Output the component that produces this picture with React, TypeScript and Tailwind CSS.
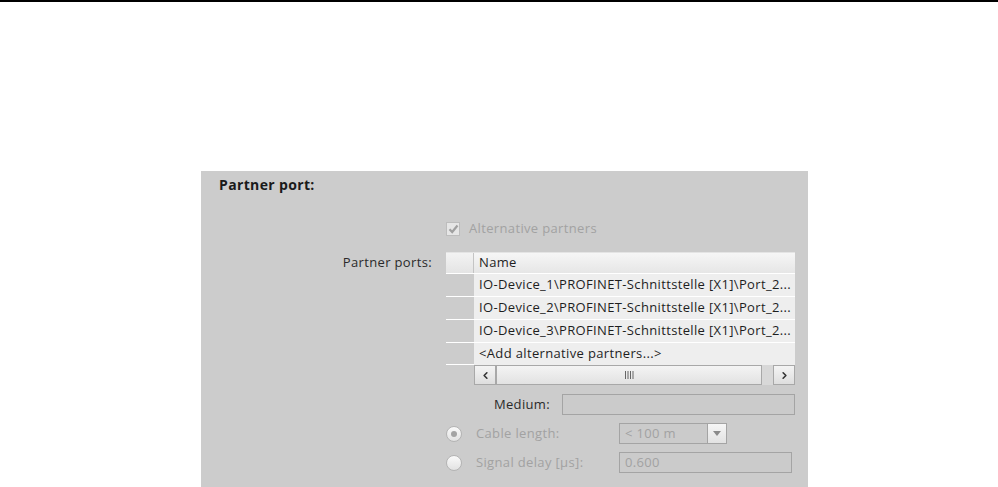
import { ChevronLeft, ChevronRight } from 'lucide-react';

const rows = [
  'IO-Device_1\\PROFINET-Schnittstelle [X1]\\Port_2...',
  'IO-Device_2\\PROFINET-Schnittstelle [X1]\\Port_2...',
  'IO-Device_3\\PROFINET-Schnittstelle [X1]\\Port_2...',
];

const Radio = ({ checked }: { checked?: boolean }) => (
  <div className="w-[16px] h-[16px] rounded-full border border-[#b4b4b4] bg-gradient-to-b from-[#fafafa] to-[#e2e2e2] flex items-center justify-center">
    {checked && <div className="w-[6px] h-[6px] rounded-full bg-[#a4a4a4]" />}
  </div>
);

const PartnerTable = () => (
  <div className="w-[349px] text-[13px] tracking-[0.35px] text-[#1e1e1e]">
    <div className="flex h-[21px] border-t border-[#e4e4e4]">
      <div className="w-[28px] bg-gradient-to-b from-[#f3f3f3] to-[#e4e4e4] border-r border-[#c4c4c4]" />
      <div className="flex-1 bg-gradient-to-b from-[#f6f6f6] to-[#e6e6e6] flex items-center pl-[5px]">Name</div>
    </div>
    {rows.map(r => (
      <div key={r} className="flex h-[23px]">
        <div className="w-[28px] border-t border-white" />
        <div className="flex-1 bg-[#eeeeee] border-t border-white flex items-center pl-[5px] whitespace-nowrap overflow-hidden">{r}</div>
      </div>
    ))}
    <div className="flex h-[23px]">
      <div className="w-[28px] border-t border-b border-white" />
      <div className="flex-1 bg-[#eeeeee] border-t border-white flex items-center pl-[5px]">&lt;Add alternative partners...&gt;</div>
    </div>
    <div className="flex h-[20px] ml-[28px] bg-[#d8d8d8]">
      <div className="w-[22px] border border-[#a8a8a8] bg-gradient-to-b from-[#f4f4f4] to-[#dedede] flex items-center justify-center">
        <ChevronLeft size={11} strokeWidth={3.5} className="text-[#333]" />
      </div>
      <div className="w-[266px] border border-[#a8a8a8] bg-gradient-to-b from-[#f4f4f4] to-[#e2e2e2] flex items-center justify-center">
        <svg width="9" height="8" viewBox="0 0 9 8">
          <path d="M0.5 0 V8 M3 0 V8 M5.5 0 V8 M8 0 V8" stroke="#666" strokeWidth="1" />
        </svg>
      </div>
      <div className="flex-1" />
      <div className="w-[22px] border border-[#a8a8a8] bg-gradient-to-b from-[#f4f4f4] to-[#dedede] flex items-center justify-center">
        <ChevronRight size={11} strokeWidth={3.5} className="text-[#333]" />
      </div>
    </div>
  </div>
);

export default function App() {
  return (
    <div className="min-h-[487px] bg-white border-t-2 border-black font-['Open_Sans',sans-serif] tracking-[0.35px]">
      <div className="ml-[201px] mt-[169px] w-[607px] h-[316px] bg-[#cccccc] pt-[6px]">
        <div className="pl-[18px] h-[16px] leading-[16px] text-[14px] font-bold text-[#1a1a1a]">Partner port:</div>

        <div className="grid grid-cols-[231px_349px] gap-x-[14px] mt-[28px]">
          <div />
          <div className="flex items-center h-[16px] gap-[9px] text-[13px] text-[#a2a2a2]">
            <div className="w-[14px] h-[14px] border border-[#bdbdbd] bg-[#e6e6e6] flex items-center justify-center">
              <svg width="11" height="10" viewBox="0 0 11 10">
                <path d="M1.5 5.2 L4.2 8 L9.5 1.5" fill="none" stroke="#a0a0a0" strokeWidth="2.2" />
              </svg>
            </div>
            Alternative partners
          </div>

          <div className="mt-[15px] h-[21px] flex items-center justify-end text-[13px] text-[#2a2a2a]">Partner ports:</div>
          <div className="mt-[15px]">
            <PartnerTable />
          </div>

          <div />
          <div className="flex items-center mt-[9px] h-[21px] text-[13px]">
            <div className="w-[104px] text-right text-[#2a2a2a]">Medium:</div>
            <div className="ml-[12px] w-[233px] h-[21px] border border-[#a4a4a4] bg-[#cbcbcb]" />
          </div>

          <div />
          <div className="flex items-center mt-[8px] h-[21px] text-[13px] text-[#a2a2a2]">
            <Radio checked />
            <div className="ml-[14px] w-[143px]">Cable length:</div>
            <div className="flex w-[108px] h-[21px] border border-[#a4a4a4]">
              <div className="flex-1 flex items-center pl-[5px] bg-[#cbcbcb]">&lt; 100 m</div>
              <div className="w-[19px] border-l border-[#a4a4a4] bg-gradient-to-b from-[#f6f6f6] to-[#e2e2e2] flex items-center justify-center">
                <svg width="8" height="5" viewBox="0 0 8 5"><path d="M0 0 H8 L4 5 Z" fill="#8a8a8a" /></svg>
              </div>
            </div>
          </div>

          <div />
          <div className="flex items-center mt-[8px] h-[21px] text-[13px] text-[#a2a2a2]">
            <Radio />
            <div className="ml-[14px] w-[143px]">Signal delay [µs]:</div>
            <div className="flex items-center w-[173px] h-[21px] border border-[#a4a4a4] bg-[#cbcbcb] pl-[5px]">0.600</div>
          </div>
        </div>
      </div>
    </div>
  );
}
